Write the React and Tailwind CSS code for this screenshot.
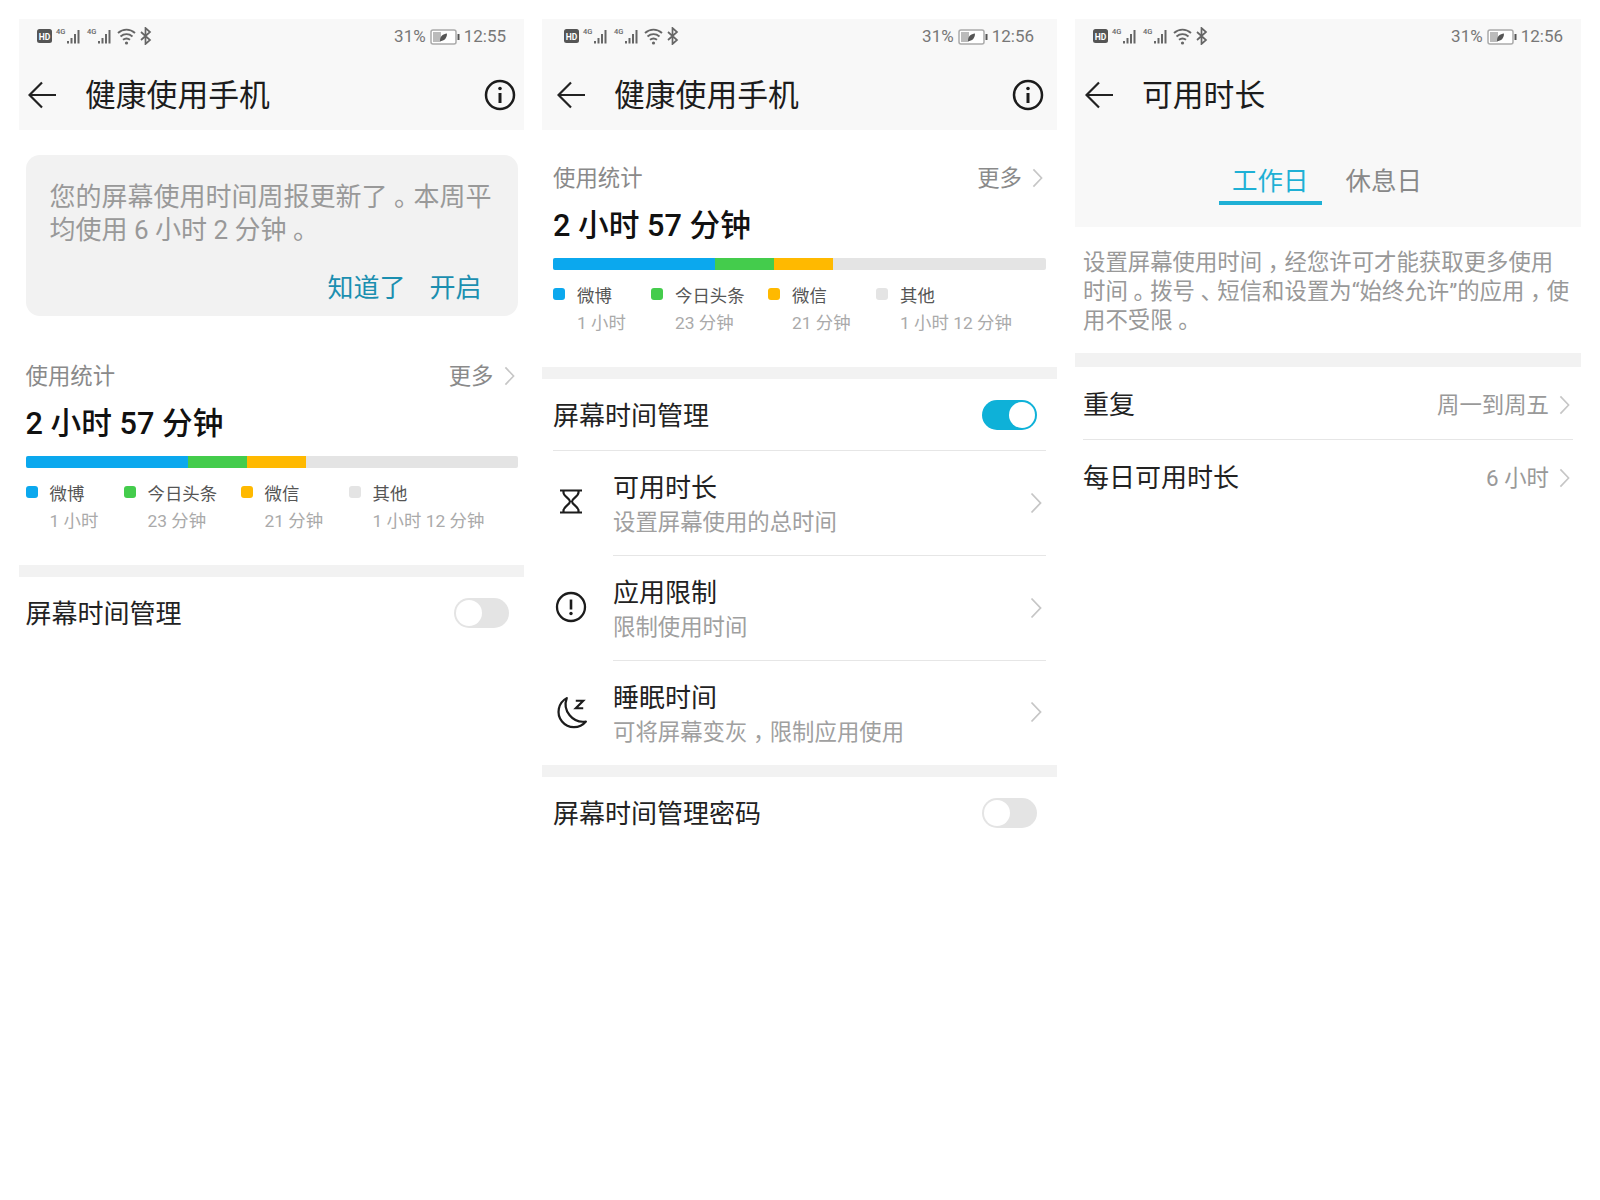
import React from "react";

const StatusBar = ({ time, className = "px-[18px]" }) => (
  <div className={`h-[34px] pt-[2px] flex items-center justify-between text-[17px] text-[#777] ${className}`}>
    <svg width="115" height="18" viewBox="0 0 115 18" className="mb-[2px]">
      <rect x="0" y="2" width="15" height="14" rx="2.500" fill="#555" />
      <text x="7.500" y="12.500" textAnchor="middle" fontSize="8.500" fontWeight="700" fill="#fff" fontFamily="Roboto">HD</text>
      {[0, 31].map((o) => (
        <g key={o} fill="#666">
          <text x={19 + o} y="7" fontSize="7.500" fontWeight="500" fontFamily="Roboto">4G</text>
          <rect x={30 + o} y="14" width="2" height="2.500" />
          <rect x={33.500 + o} y="11" width="2" height="5.500" />
          <rect x={37 + o} y="7" width="2" height="9.500" />
          <rect x={40.500 + o} y="3" width="2" height="13.500" />
        </g>
      ))}
      <g fill="none" stroke="#666" strokeWidth="1.900">
        <path d="M81 6c5-4.500 12-4.500 17 0" />
        <path d="M83.500 9.500c3.600-3 8.400-3 12 0" />
        <path d="M86 12.800c2-1.600 5-1.600 7 0" />
      </g>
      <circle cx="89.500" cy="16" r="1.600" fill="#666" />
      <path d="M104 5l9 8-4.500 4V1l4.500 4-9 8" fill="none" stroke="#666" strokeWidth="1.700" />
    </svg>
    <div className="flex items-center gap-[4px]">
      <span>31%</span>
      <svg width="30" height="16" viewBox="0 0 30 16">
        <rect x="1" y="1" width="25" height="14" rx="2" fill="#fff" stroke="#aaa" strokeWidth="1.500" />
        <rect x="3" y="3" width="8" height="10" fill="#bbb" />
        <path d="M10 12c0-5 3-7 7-7.500 0 5-3 7.500-7 7.500z" fill="#555" />
        <rect x="27.500" y="5" width="2" height="6" fill="#555" />
      </svg>
      <span>{time}</span>
    </div>
  </div>
);

const Back = () => (
  <svg width="28" height="28" viewBox="0 0 28 28" className="shrink-0" fill="none" stroke="#222" strokeWidth="2.200">
    <path d="M1.500 14H28M14 1.500 1.500 14 14 26.500" />
  </svg>
);

const TitleRow = ({ title, info, className = "pl-[10px] pr-[10px]" }) => (
  <div className={`mt-[11px] h-[62px] flex items-center ${className}`}>
    <Back />
    <div className="ml-[29px] pt-[2px] text-[30.800px] text-[#1c1c1c]">{title}</div>
    {info && (
      <svg width="32" height="32" viewBox="0 0 32 32" className="ml-auto" fill="none" stroke="#1c1c1c" strokeWidth="2.500">
        <circle cx="16" cy="16" r="14" />
        <circle cx="16" cy="9.500" r="1.800" fill="#1c1c1c" stroke="none" />
        <path d="M16 14v10" strokeWidth="3" />
      </svg>
    )}
  </div>
);

const Chevron = ({ w = 12, h = 22 }) => (
  <svg width={w} height={h} viewBox="0 0 12 22" className="shrink-0" fill="none" stroke="#c6c6c6" strokeWidth="1.800">
    <path d="M1.500 1.500 10.500 11 1.500 20.500" />
  </svg>
);

const Toggle = ({ on }) => (
  <div className={`w-[55px] h-[30px] rounded-full p-[2px] flex shrink-0 ${on ? "bg-[#0eb1d8] justify-end" : "bg-[#e4e4e4] justify-start"}`}>
    <div className="w-[26px] h-[26px] rounded-full bg-white" />
  </div>
);

/* Punctuation in the reference sits low and centred in its full-width cell */
const P = ({ children }) => (
  <span className="inline-block w-[1em] text-center [font-feature-settings:'halt']">{children}</span>
);

const legend = [
  ["微博", "1 小时", "bg-[#0ba8ee]"],
  ["今日头条", "23 分钟", "bg-[#44cc4c]"],
  ["微信", "21 分钟", "bg-[#ffb900]"],
  ["其他", "1 小时 12 分钟", "bg-[#e4e4e4]"],
];

const Stats = () => (
  <div>
    <div className="h-[30px] flex items-center justify-between text-[22.400px] leading-[30px] text-[#8a8a8a]">
      <span>使用统计</span>
      <div className="flex items-center gap-[10px] pr-[3px]">
        <span>更多</span>
        <Chevron w={11} h={20} />
      </div>
    </div>
    <div className="mt-[13px] text-[30.700px] leading-[40px] font-medium text-[#111]">2 小时 57 分钟</div>
    <div className="mt-[12.500px] h-[12px] rounded-[2px] bg-[#e4e4e4] flex overflow-hidden">
      <div className="w-[162px] bg-[#0ba8ee]" />
      <div className="w-[59px] bg-[#44cc4c]" />
      <div className="w-[59px] bg-[#ffb900]" />
    </div>
    <div className="mt-[13px] grid grid-cols-[98px_117px_108px_1fr]">
      {legend.map(([a, b, c]) => (
        <div key={a} className="flex">
          <div className={`w-[12px] h-[12px] rounded-[3px] mt-[5px] ${c}`} />
          <div className="ml-[12px] whitespace-nowrap text-[17.400px]">
            <div className="leading-[26px] text-[#555]">{a}</div>
            <div className="leading-[28px] text-[#aaa]">{b}</div>
          </div>
        </div>
      ))}
    </div>
  </div>
);

const Divider = ({ className = "" }) => <div className={`h-[12px] bg-[#f2f2f2] ${className}`} />;

const ToggleRow = ({ label, on, className = "pr-[8px]" }) => (
  <div className={`h-[71px] flex items-center justify-between text-[26px] text-[#222] ${className}`}>
    <span className="pt-[3px]">{label}</span>
    <Toggle on={on} />
  </div>
);

const Hourglass = () => (
  <svg width="22" height="25" viewBox="0 0 22 25" fill="none" stroke="#1c1c1c" strokeWidth="2.200">
    <path d="M0 1.500h22M0 23.500h22M3.500 1.500v2c0 4 6.500 6 6.500 9 0 3-6.500 5-6.500 9v2M18.500 1.500v2c0 4-6.500 6-6.500 9 0 3 6.500 5 6.500 9v2" />
  </svg>
);
const Alert = () => (
  <svg width="32" height="32" viewBox="0 0 32 32" fill="none" stroke="#1c1c1c" strokeWidth="2.300">
    <circle cx="16" cy="16" r="14" />
    <path d="M16 8.500v10" strokeWidth="2.600" />
    <circle cx="16" cy="22.500" r="1.700" fill="#1c1c1c" stroke="none" />
  </svg>
);
const Moon = () => (
  <svg width="34" height="34" viewBox="0 0 32 32" fill="none" stroke="#1c1c1c" strokeWidth="2.100">
    <path d="M12 2A14.500 14.500 0 1 0 30 24 A16.500 16.500 0 0 1 12 2Z" strokeLinejoin="round" />
    <path d="M20.500 4.500h7l-7 7h7" strokeWidth="2" />
  </svg>
);

const Item = ({ icon, title, sub, last, iconClass = "pb-[4px]", chevClass = "pb-[4px]" }) => (
  <div className="flex">
    <div className={`w-[36px] shrink-0 flex items-center justify-center ${iconClass}`}>{icon}</div>
    <div className={`ml-[24px] flex-1 flex items-center justify-between pt-[20px] pb-[16px] ${last ? "" : "border-b border-[#e6e6e6]"}`}>
      <div>
        <div className="text-[26px] leading-[34px] text-[#222]">{title}</div>
        <div className="text-[22.400px] leading-[34px] text-[#a0a0a0]">{sub}</div>
      </div>
      <div className={`pr-[4px] ${chevClass}`}><Chevron /></div>
    </div>
  </div>
);

const Row = ({ label, value, className = "" }) => (
  <div className={`flex items-center justify-between text-[26px] text-[#222] ${className}`}>
    <span>{label}</span>
    <div className="flex items-center gap-[10px] pr-[3px]">
      <span className="text-[22.400px] text-[#999]">{value}</span>
      <Chevron w={11} h={20} />
    </div>
  </div>
);

export default function App() {
  return (
    <div className="min-h-[1200px] bg-white pt-[19px] pl-[19px] flex items-start gap-[18px] font-['Roboto','Noto_Sans_CJK_SC',sans-serif]">
      {/* Left */}
      <div className="w-[505px] shrink-0">
        <div className="bg-[#f8f8f8] h-[111px]">
          <StatusBar time="12:55" />
          <TitleRow title="健康使用手机" info className="pl-[9px] pr-[8px]" />
        </div>
        <div className="px-[6.500px]">
          <div className="mt-[25px] h-[161px] rounded-[14px] bg-[#f2f2f2] pt-[26px] px-[24px]">
            <div className="text-[26px] leading-[33px] text-[#999] whitespace-nowrap">
              您的屏幕使用时间周报更新了<P>。</P>本周平<br />均使用 6 小时 2 分钟<P>。</P>
            </div>
            <div className="mt-[23px] flex justify-end gap-[24px] pr-[12px] text-[26px] leading-[36px] text-[#1b8fb0]">
              <span>知道了</span>
              <span>开启</span>
            </div>
          </div>
          <div className="mt-[44.500px]"><Stats /></div>
        </div>
        <Divider className="mt-[30px]" />
        <div className="px-[6.500px]">
          <ToggleRow label="屏幕时间管理" className="pr-[8.500px]" />
        </div>
      </div>

      {/* Middle */}
      <div className="w-[515px] shrink-0">
        <div className="bg-[#f8f8f8] h-[111px]">
          <StatusBar time="12:56" className="pl-[22px] pr-[23px]" />
          <TitleRow title="健康使用手机" info className="pl-[15px] pr-[13px]" />
        </div>
        <div className="px-[11px] mt-[32.500px]"><Stats /></div>
        <Divider className="mt-[30px]" />
        <div className="px-[11px]">
          <div className="border-b border-[#e6e6e6]">
            <ToggleRow label="屏幕时间管理" on className="pr-[9px]" />
          </div>
          <Item icon={<Hourglass />} title="可用时长" sub="设置屏幕使用的总时间" />
          <Item icon={<Alert />} title="应用限制" sub="限制使用时间" />
          <Item icon={<Moon />} title="睡眠时间" sub={<>可将屏幕变灰<P>，</P>限制应用使用</>} last iconClass="" chevClass="pb-[6px]" />
        </div>
        <Divider />
        <div className="px-[11px]">
          <ToggleRow label="屏幕时间管理密码" on={false} className="pr-[9px]" />
        </div>
      </div>

      {/* Right */}
      <div className="w-[506px] shrink-0">
        <div className="bg-[#f8f8f8] h-[208px]">
          <StatusBar time="12:56" />
          <TitleRow title="可用时长" />
          <div className="mt-[37px] pl-[144px] flex text-[25.500px] leading-[36px]">
            <div className="px-[13px] pb-[2px] border-b-4 border-[#1fb0d5] text-[#1fb0d5]">工作日</div>
            <div className="ml-[24px] text-[#888]">休息日</div>
          </div>
        </div>
        <div className="mx-[8px]">
          <div className="mt-[21px] text-[22.400px] leading-[29px] text-[#999] whitespace-nowrap">
            设置屏幕使用时间<P>，</P>经您许可才能获取更多使用<br />
            时间<P>。</P>拨号<P>、</P>短信和设置为“始终允许”的应用<P>，</P>使<br />
            用不受限<P>。</P>
          </div>
        </div>
        <div className="mt-[18px] h-[14px] bg-[#f2f2f2]" />
        <div className="mx-[8px]">
          <Row label="重复" value="周一到周五" className="h-[73px] pt-[5px] border-b border-[#e6e6e6]" />
          <Row label="每日可用时长" value="6 小时" className="h-[75px] pt-[2px]" />
        </div>
      </div>
    </div>
  );
}
